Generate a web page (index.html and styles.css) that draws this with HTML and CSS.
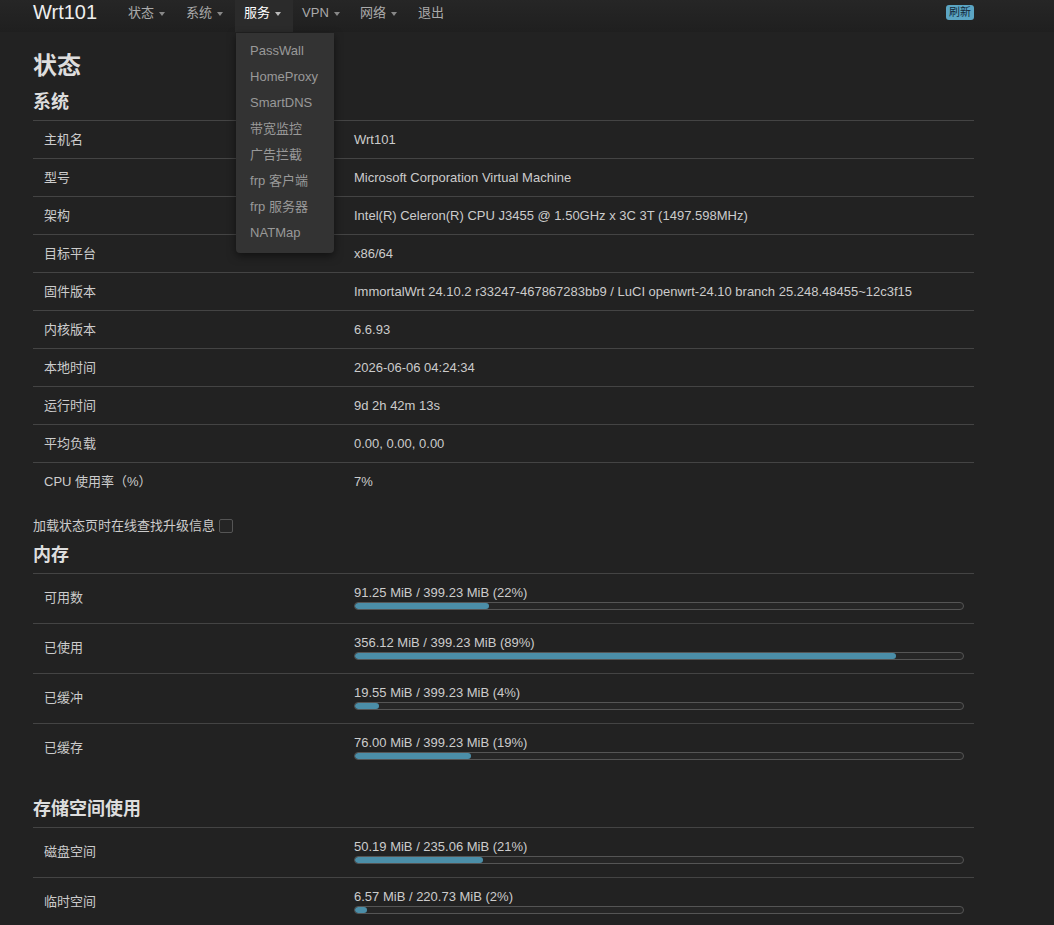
FILE: index.html
```html
<!DOCTYPE html>
<html lang="zh-CN">
<head>
    <title>Wrt101 - 状态 - LuCI</title>
    <meta charset="UTF-8">
    <meta name="viewport" content="width=device-width, initial-scale=1">
    <link rel="stylesheet" href="styles.css">
</head>
<body>
    <header class="topbar">
        <a class="brand" href="#">Wrt101</a>
        <ul class="nav">
            <li><a href="#">状态<span class="caret"></span></a></li>
            <li><a href="#">系统<span class="caret"></span></a></li>
            <li class="active">
                <a href="#">服务<span class="caret"></span></a>
                <ul class="dropdown">
                    <li><a href="#">PassWall</a></li>
                    <li><a href="#">HomeProxy</a></li>
                    <li><a href="#">SmartDNS</a></li>
                    <li><a href="#">带宽监控</a></li>
                    <li><a href="#">广告拦截</a></li>
                    <li><a href="#">frp 客户端</a></li>
                    <li><a href="#">frp 服务器</a></li>
                    <li><a href="#">NATMap</a></li>
                </ul>
            </li>
            <li><a href="#">VPN<span class="caret"></span></a></li>
            <li><a href="#">网络<span class="caret"></span></a></li>
            <li><a href="#">退出</a></li>
        </ul>
        <span class="badge">刷新</span>
    </header>

    <div class="main">
        <h2>状态</h2>

        <!-- 系统 -->
        <h3>系统</h3>
        <table class="info">
            <tr><td class="key">主机名</td><td>Wrt101</td></tr>
            <tr><td class="key">型号</td><td>Microsoft Corporation Virtual Machine</td></tr>
            <tr><td class="key">架构</td><td>Intel(R) Celeron(R) CPU J3455 @ 1.50GHz x 3C 3T (1497.598MHz)</td></tr>
            <tr><td class="key">目标平台</td><td>x86/64</td></tr>
            <tr><td class="key">固件版本</td><td>ImmortalWrt 24.10.2 r33247-467867283bb9 / LuCI openwrt-24.10 branch 25.248.48455~12c3f15</td></tr>
            <tr><td class="key">内核版本</td><td>6.6.93</td></tr>
            <tr><td class="key">本地时间</td><td>2026-06-06 04:24:34</td></tr>
            <tr><td class="key">运行时间</td><td>9d 2h 42m 13s</td></tr>
            <tr><td class="key">平均负载</td><td>0.00, 0.00, 0.00</td></tr>
            <tr><td class="key">CPU 使用率（%）</td><td>7%</td></tr>
        </table>

        <label class="check">加载状态页时在线查找升级信息<span class="box"></span></label>

        <!-- 内存 -->
        <h3 class="after-check">内存</h3>
        <table class="info bars">
            <tr>
                <td class="key">可用数</td>
                <td><div class="val">91.25 MiB / 399.23 MiB (22%)</div><div class="bar"><div class="fill" style="width: 22%"></div></div></td>
            </tr>
            <tr>
                <td class="key">已使用</td>
                <td><div class="val">356.12 MiB / 399.23 MiB (89%)</div><div class="bar"><div class="fill" style="width: 89%"></div></div></td>
            </tr>
            <tr>
                <td class="key">已缓冲</td>
                <td><div class="val">19.55 MiB / 399.23 MiB (4%)</div><div class="bar"><div class="fill" style="width: 4%"></div></div></td>
            </tr>
            <tr>
                <td class="key">已缓存</td>
                <td><div class="val">76.00 MiB / 399.23 MiB (19%)</div><div class="bar"><div class="fill" style="width: 19%"></div></div></td>
            </tr>
        </table>

        <!-- 存储 -->
        <h3 class="spaced">存储空间使用</h3>
        <table class="info bars">
            <tr>
                <td class="key">磁盘空间</td>
                <td><div class="val">50.19 MiB / 235.06 MiB (21%)</div><div class="bar"><div class="fill" style="width: 21%"></div></div></td>
            </tr>
            <tr>
                <td class="key">临时空间</td>
                <td><div class="val">6.57 MiB / 220.73 MiB (2%)</div><div class="bar"><div class="fill" style="width: 2%"></div></div></td>
            </tr>
        </table>
    </div>
</body>
</html>
```

FILE: styles.css
```css
body { margin: 0; background: #222; color: #ccc; font-family: "Liberation Sans", "Noto Sans CJK SC", sans-serif; font-size: 13px; }
a { text-decoration: none; color: inherit; }
ul { list-style: none; margin: 0; padding: 0; }

/* barra superior */
.topbar { height: 32px; display: flex; align-items: flex-start; padding: 0 80px 0 33px; background: linear-gradient(#262626, #1f1f1f); position: relative; }
.brand { font-size: 20px; line-height: 25px; color: #eee; margin-right: 22px; }
.nav { display: flex; height: 32px; }
.nav > li { position: relative; height: 32px; }
.nav > li > a { display: block; width: 58px; box-sizing: border-box; padding-left: 9px; line-height: 25px; height: 32px; color: #aaa; }
.nav > li.active > a { background: #2b2b2b; color: #fff; }
.caret { display: inline-block; margin-left: 5px; vertical-align: middle; border-top: 4px solid #888; border-left: 3.5px solid transparent; border-right: 3.5px solid transparent; }
.active .caret { border-top-color: #bbb; }
.dropdown { position: absolute; top: 33px; left: 1px; width: 98px; padding: 5px 0 7px; background: #333; border-radius: 0 0 4px 4px; box-shadow: 0 3px 8px rgba(0,0,0,0.5); z-index: 10; }
.dropdown a { display: block; padding-left: 14px; line-height: 26px; color: #999; white-space: nowrap; }
.badge { margin-left: auto; margin-top: 5px; background: #5ba5c3; color: #13283a; font-size: 11px; line-height: 15px; padding: 0 3px; border-radius: 3px; }

/* conteúdo */
.main { width: 941px; margin-left: 33px; }
h2 { font-size: 24px; line-height: 30px; margin: 19px 0 0; color: #ddd; }
h3 { font-size: 18px; line-height: 24px; margin: 9px 0 6px; color: #ddd; }
h3.after-check { margin-top: 8px; }
h3.spaced { margin-top: 24px; }
.info { width: 100%; border-collapse: collapse; }
.info td { border-top: 1px solid #444; height: 37px; padding: 0; vertical-align: middle; color: #ccc; }
.info td.key { width: 310px; height: 35px; padding: 0 0 2px 11px; }
.bars td { height: 49px; }
.bars td.key { height: 45px; padding-bottom: 4px; }
.val { line-height: 16px; margin-top: -3px; }
.bar { width: 608px; height: 6px; margin-top: 1px; border: 1px solid #555; border-radius: 4px; background: #262626; overflow: hidden; }
.fill { height: 100%; background: #4b8ea8; border-radius: 3px; }
.check { display: flex; align-items: center; margin-top: 17px; line-height: 18px; }
.box { display: inline-block; width: 12px; height: 12px; margin-left: 4px; border: 1px solid #555; border-radius: 2px; background: #252525; }
```
